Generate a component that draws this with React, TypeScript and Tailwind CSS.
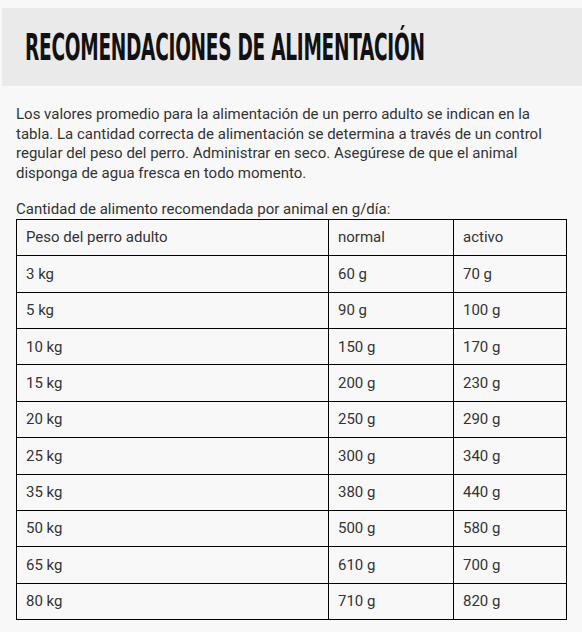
import React from 'react';

const filas = [
  ['3 kg', '60 g', '70 g'],
  ['5 kg', '90 g', '100 g'],
  ['10 kg', '150 g', '170 g'],
  ['15 kg', '200 g', '230 g'],
  ['20 kg', '250 g', '290 g'],
  ['25 kg', '300 g', '340 g'],
  ['35 kg', '380 g', '440 g'],
  ['50 kg', '500 g', '580 g'],
  ['65 kg', '610 g', '700 g'],
  ['80 kg', '710 g', '820 g'],
];

export default function App() {
  return (
    <div className="min-h-[632px] w-[582px] bg-[#f8f8f8] pt-2 font-['Roboto',sans-serif] text-[#333]">
      {/* Cabecera */}
      <div className="ml-[2px] flex h-[78px] items-center bg-[#eaeaea] pl-[23px]">
        <h2 className="origin-left scale-x-[0.557] whitespace-nowrap font-['DejaVu_Sans_Condensed','DejaVu_Sans',sans-serif] text-[37px] font-black uppercase leading-none tracking-[-0.5px] text-[#111]">
          Recomendaciones de alimentación
        </h2>
      </div>

      <div className="px-4 pt-[19px]">
        <p className="text-[15px] leading-[19.7px]">
          Los valores promedio para la alimentación de un perro adulto se indican en la tabla. La cantidad
          correcta de alimentación se determina a través de un control regular del peso del perro.
          Administrar en seco. Asegúrese de que el animal disponga de agua fresca en todo momento.
        </p>

        <p className="mt-[16px] text-[15px] leading-[19px]">Cantidad de alimento recomendada por animal en g/día:</p>

        <table className="w-[551px] border-collapse text-[15px]">
          <tbody>
            <tr className="h-[36.5px]">
              <td className="w-[312px] border border-black px-[9px]">Peso del perro adulto</td>
              <td className="w-[125px] border border-black px-[9px]">normal</td>
              <td className="border border-black px-[9px]">activo</td>
            </tr>
            {filas.map((fila, i) => (
              <tr key={i} className="h-[36.4px]">
                {fila.map((celda, j) => (
                  <td key={j} className="border border-black px-[9px]">
                    {celda}
                  </td>
                ))}
              </tr>
            ))}
          </tbody>
        </table>
      </div>
    </div>
  );
}
